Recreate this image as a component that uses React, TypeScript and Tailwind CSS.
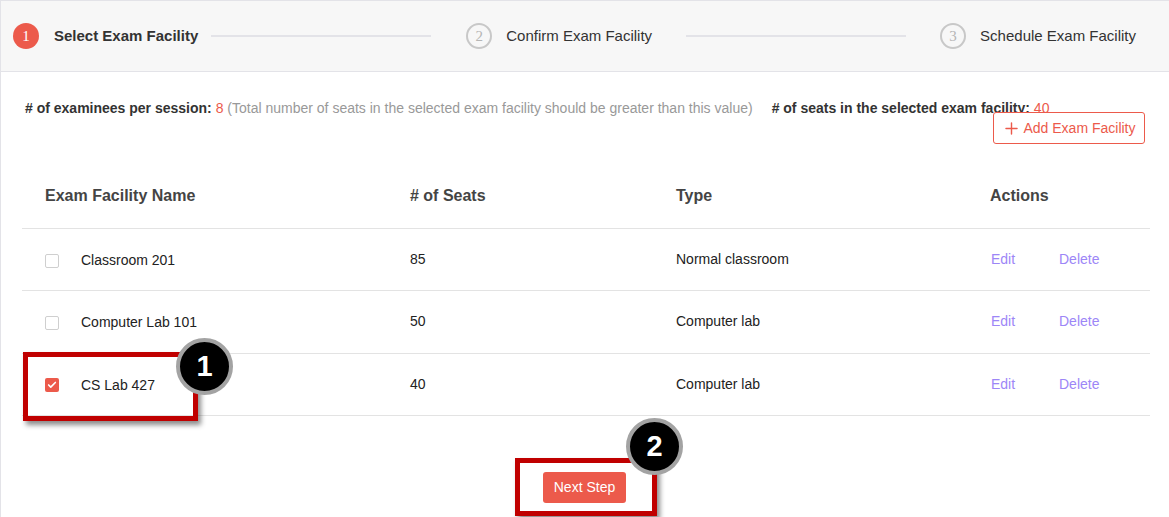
import { Check, Plus } from "lucide-react";

type Row = { name: string; seats: number; type: string; checked?: boolean };

const rows: Row[] = [
  { name: "Classroom 201", seats: 85, type: "Normal classroom" },
  { name: "Computer Lab 101", seats: 50, type: "Computer lab" },
  { name: "CS Lab 427", seats: 40, type: "Computer lab", checked: true },
];

function StepDot({ n, active }: { n: number; active?: boolean }) {
  return (
    <span
      className={
        active
          ? "flex size-[26px] shrink-0 items-center justify-center rounded-full bg-[#ec5a4b] font-['Liberation_Serif',serif] text-[15px] text-white"
          : "flex size-[26px] shrink-0 items-center justify-center rounded-full border-2 border-[#c8c8c8] font-['Liberation_Serif',serif] text-[15px] text-[#b5b5b5]"
      }
    >
      {n}
    </span>
  );
}

function Marker({ n }: { n: number }) {
  return (
    <span className="absolute flex size-[57px] items-center justify-center rounded-full border-[4px] border-[#a3a3a3] bg-black text-[29px] font-bold text-white">
      {n}
    </span>
  );
}

export default function App() {
  return (
    <main className="relative h-[517px] w-[1169px] overflow-hidden border-l border-t border-[#e3e3e8] bg-white font-['Liberation_Sans',Arial,sans-serif] text-[#222]">
      <header className="flex h-[71px] items-center border-b border-[#e3e3e8] bg-[#f7f7f7] pl-[12px] text-[15px]">
        <StepDot n={1} active />
        <span className="ml-[15px] font-bold text-[#333]">Select Exam Facility</span>
        <span className="ml-[13px] mr-[35px] h-[2px] w-[220px] bg-[#e3e3e8]" />
        <StepDot n={2} />
        <span className="ml-[14px] text-[#333]">Confirm Exam Facility</span>
        <span className="ml-[34px] mr-[34px] h-[2px] w-[220px] bg-[#e3e3e8]" />
        <StepDot n={3} />
        <span className="ml-[14px] text-[#333]">Schedule Exam Facility</span>
      </header>

      <section className="px-[21px] pt-[28px]">
        <p className="pl-[3px] text-[14px] leading-[17px]">
          <b className="text-[#333]"># of examinees per session:</b>{" "}
          <span className="text-[#ec5a4b]">8</span>{" "}
          <span className="text-[#999]">
            (Total number of seats in the selected exam facility should be greater than this value)
          </span>
          <b className="ml-[19px] text-[#333]"># of seats in the selected exam facility:</b>{" "}
          <span className="text-[#ec5a4b]">40</span>
        </p>
        <div className="-mt-[5px] flex justify-end pr-[3px]">
          <button className="flex h-[32px] w-[152px] items-center justify-center gap-[2px] rounded-[3px] border border-[#ec5a4b] bg-white text-[14px] text-[#ec5a4b]">
            <Plus className="size-[19px]" strokeWidth={1.8} />
            Add Exam Facility
          </button>
        </div>

        <div className="mt-[19px] w-[1128px]">
          <div className="grid h-[66px] grid-cols-[365px_266px_314px_1fr] items-center border-b border-[#e3e3e3] text-[16px] font-bold text-[#444]">
            <span className="pl-[23px]">Exam Facility Name</span>
            <span className="pl-[23px]"># of Seats</span>
            <span className="pl-[23px]">Type</span>
            <span className="pl-[23px]">Actions</span>
          </div>
          {rows.map((r) => (
            <div
              key={r.name}
              className="grid h-[62.3px] grid-cols-[365px_266px_314px_1fr] items-center border-b border-[#e3e3e3] text-[14px]"
            >
              <span className="flex items-center pl-[23px] pt-[2px]">
                {r.checked ? (
                  <span className="flex size-[14px] items-center justify-center rounded-[2px] bg-[#ec5a4b] text-white">
                    <Check className="size-[10px]" strokeWidth={4} />
                  </span>
                ) : (
                  <span className="size-[14px] rounded-[2px] border border-[#cfcfcf] bg-white" />
                )}
                <span className="ml-[22px]">{r.name}</span>
              </span>
              <span className="pl-[23px]">{r.seats}</span>
              <span className="pl-[23px]">{r.type}</span>
              <span className="flex pl-[24px] text-[#9d86f7]">
                <span className="w-[68px]">Edit</span>
                <span>Delete</span>
              </span>
            </div>
          ))}
        </div>

        <div className="mt-[56px] flex justify-center pr-px">
          <button className="h-[31px] w-[83px] rounded-[3px] bg-[#ec5a4b] text-[14px] text-white">
            Next Step
          </button>
        </div>
      </section>

      <div className="absolute left-[22px] top-[351px] h-[69px] w-[175px] border-[5px] border-[#c00000] shadow-[3px_4px_5px_rgba(0,0,0,0.45)]" />
      <div className="absolute left-[175px] top-[337px]">
        <Marker n={1} />
      </div>
      <div className="absolute left-[514px] top-[457px] h-[58px] w-[142px] border-[5px] border-[#c00000] shadow-[3px_4px_5px_rgba(0,0,0,0.45)]" />
      <div className="absolute left-[625px] top-[417px]">
        <Marker n={2} />
      </div>
    </main>
  );
}
